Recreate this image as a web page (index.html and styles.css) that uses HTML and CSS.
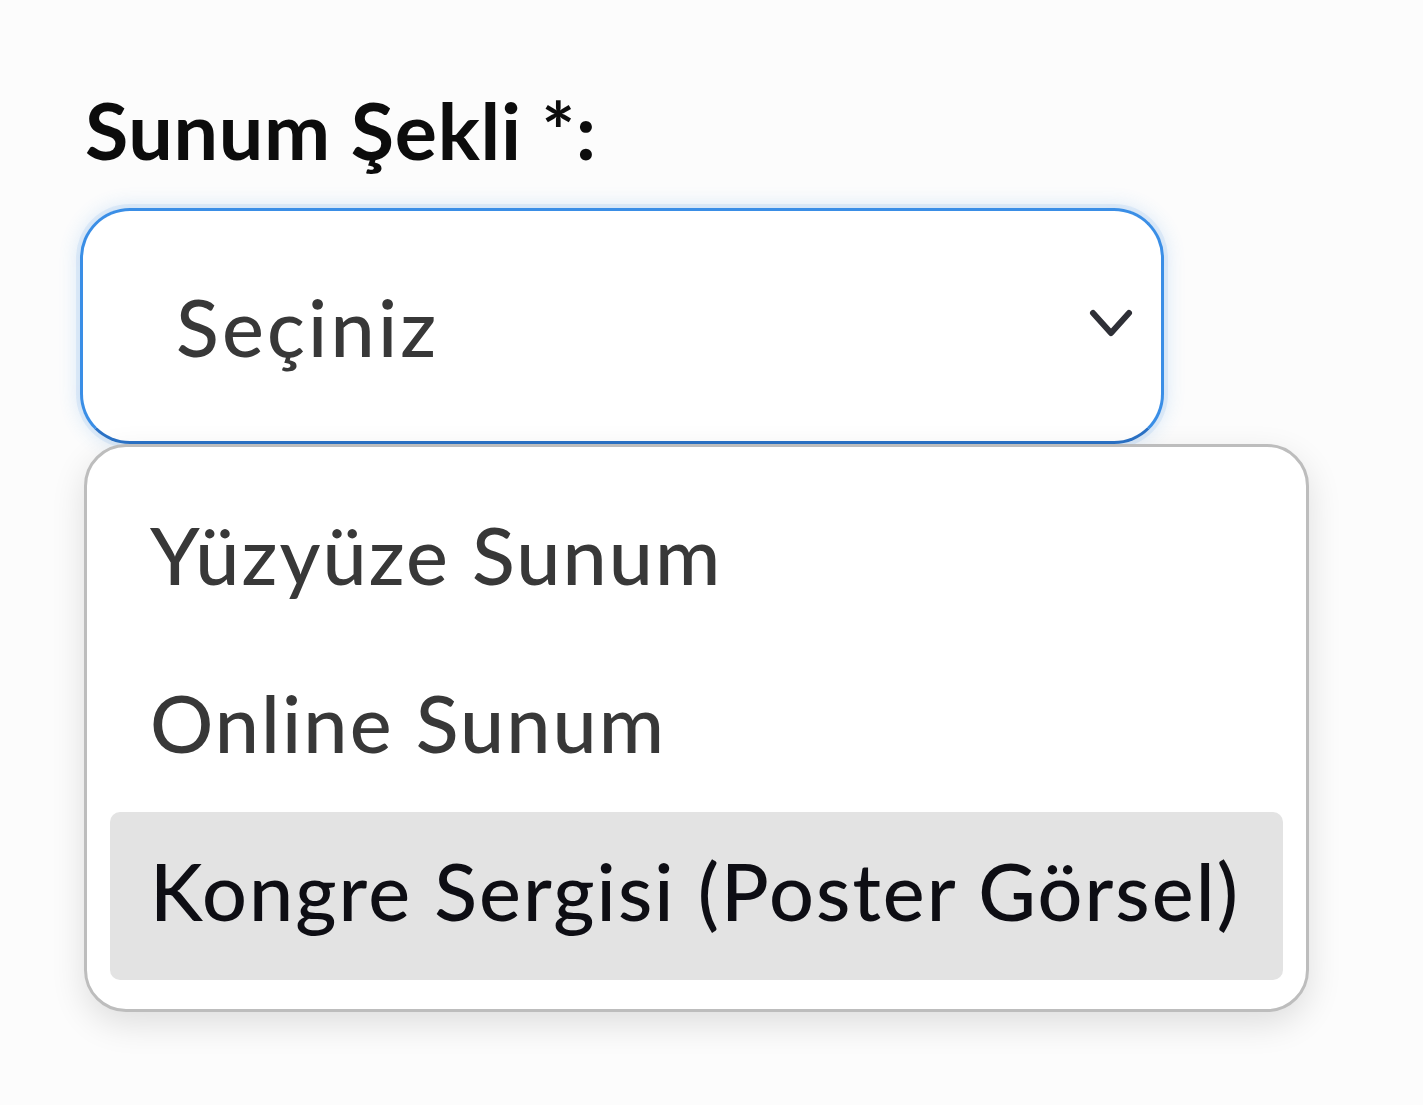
FILE: index.html
```html
<!DOCTYPE html>
<html lang="tr">
<head>
    <meta charset="UTF-8">
    <meta name="viewport" content="width=device-width, initial-scale=1.0">
    <title>Sunum Şekli</title>
    <link rel="stylesheet" href="styles.css">
</head>
<body>
    <div class="field">
        <label class="label" for="sunum">Sunum Şekli *:</label>
        <div class="select-wrap">
            <div class="select" id="sunum">
                <span class="select-value">Seçiniz</span>
                <svg class="chevron" viewBox="0 0 44 30" width="44" height="30">
                    <path d="M4 5 L22 25 L40 5" fill="none" stroke="currentColor" stroke-width="6" stroke-linecap="round" stroke-linejoin="round"/>
                </svg>
            </div>
            <ul class="menu">
                <li class="option">Yüzyüze Sunum</li>
                <li class="option">Online Sunum</li>
                <li class="option active">Kongre Sergisi (Poster Görsel)</li>
            </ul>
        </div>
    </div>
</body>
</html>
```

FILE: styles.css
```css
:root {
    --bg: #fcfcfc;
    --text: #383838;
    --blue: #3a8ee6;
}
body {
    margin: 0;
    background: var(--bg);
    font-family: Lato, "Open Sans", sans-serif;
    min-height: 100vh;
}
.field {
    padding: 82px 0 0 80px;
}
.label {
    display: block;
    font-size: 79px;
    font-weight: 700;
    line-height: 96px;
    letter-spacing: 0.7px;
    color: #0c0c0c;
    margin: 0 0 30px 5px;
}
.select-wrap {
    position: relative;
    width: 1084px;
}
.select {
    box-sizing: border-box;
    height: 236px;
    display: flex;
    align-items: center;
    justify-content: space-between;
    padding: 0 28px 0 93px;
    border: 3px solid var(--blue);
    border-bottom-color: #2b72c6;
    border-radius: 50px;
    background: #fff;
    box-shadow: 0 0 0 4px rgba(58, 142, 230, 0.1), 0 0 18px 4px rgba(58, 142, 230, 0.16);
}
.select-value {
    font-size: 79px;
    font-weight: 500;
    letter-spacing: 3.2px;
    color: #383838;
}
.chevron {
    color: #2f3037;
    margin-top: -6px;
}
.menu {
    position: absolute;
    top: 236px;
    left: 4px;
    width: 1225px;
    box-sizing: border-box;
    margin: 0;
    padding: 29px 23px;
    list-style: none;
    background: #fff;
    border: 3px solid #bdbdbd;
    border-radius: 42px;
    box-shadow: 0 12px 34px rgba(0, 0, 0, 0.12);
}
.option {
    box-sizing: border-box;
    height: 168px;
    display: flex;
    align-items: center;
    padding: 0 0 12px 40px;
    font-size: 79px;
    font-weight: 500;
    letter-spacing: 2.1px;
    color: #383838;
    border-radius: 10px;
}
.option.active {
    background: #e3e3e3;
    color: #0e0e14;
}
```
